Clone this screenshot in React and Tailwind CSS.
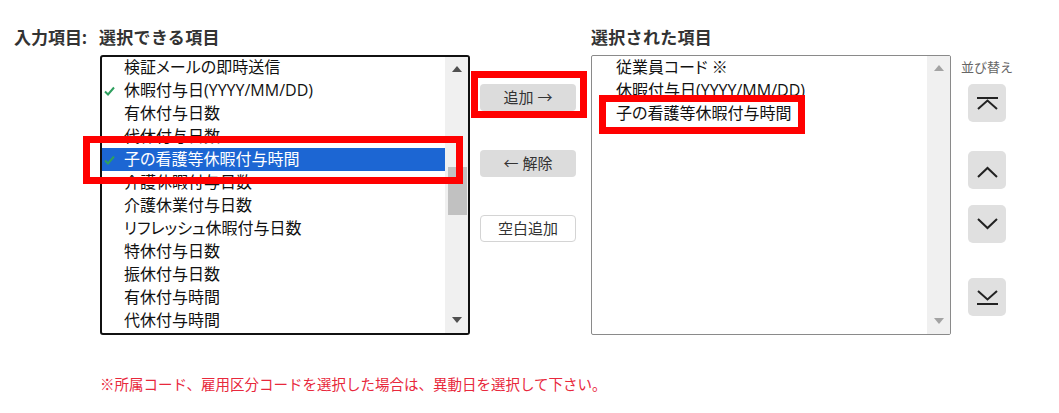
import React from "react";

const available = [
	{ label: "検証メールの即時送信" },
	{ label: "休暇付与日(YYYY/MM/DD)", checked: true },
	{ label: "有休付与日数" },
	{ label: "代休付与日数" },
	{ label: "子の看護等休暇付与時間", checked: true, selected: true },
	{ label: "介護休暇付与日数" },
	{ label: "介護休業付与日数" },
	{ label: "リフレッシュ休暇付与日数" },
	{ label: "特休付与日数" },
	{ label: "振休付与日数" },
	{ label: "有休付与時間" },
	{ label: "代休付与時間" },
];

const chosen = ["従業員コード ※", "休暇付与日(YYYY/MM/DD)", "子の看護等休暇付与時間"];

function Check() {
	return (
		<svg width="11" height="10" viewBox="0 0 11 10" className="absolute left-[2px] top-[7px]">
			<polyline points="1,5.5 4,8.5 10,1.5" fill="none" stroke="#2e9f5e" strokeWidth="2" />
		</svg>
	);
}

function ScrollBar({ dark, thumb }) {
	const arrow = dark ? "#505050" : "#a3a3a3";
	return (
		<div className="relative w-[23px] h-full bg-[#f0f0f0] shrink-0">
			<svg width="10" height="6" viewBox="0 0 10 6" className="absolute left-[7px] top-[9px]">
				<polygon points="0,6 5,0 10,6" fill={arrow} />
			</svg>
			{thumb && <div className="absolute left-[3px] right-[1px] top-[110px] h-[48px] bg-[#c1c1c1]" />}
			<svg width="10" height="6" viewBox="0 0 10 6" className="absolute left-[7px] bottom-[10px]">
				<polygon points="0,0 10,0 5,6" fill={arrow} />
			</svg>
		</div>
	);
}

function SortButton({ children }) {
	return (
		<button className="w-[38px] h-[38px] rounded-[5px] bg-[#e0e0e0]">
			<svg width="38" height="38" viewBox="0 0 38 38" fill="none" stroke="#222" strokeWidth="2">
				{children}
			</svg>
		</button>
	);
}

export default function App() {
	return (
		<div
			className="w-[1059px] h-[413px] bg-white text-[#222] pl-[14px] pt-[27px]"
			style={{ fontFamily: '"Open Sans", "Noto Sans CJK JP", sans-serif' }}
		>
			<div className="flex">
				<div className="w-[86px] shrink-0 text-[17px] leading-[21px] font-bold text-[#333]">入力項目:</div>

				{/* available list */}
				<div className="w-[370px] shrink-0">
					<div className="text-[17px] leading-[21px] font-bold text-[#333] mb-[7px] -ml-px tracking-[0.3px]">選択できる項目</div>
					<div className="relative">
						<div className="h-[280px] border-2 border-[#111] rounded-[3px] flex overflow-hidden">
							<div className="flex-1 overflow-hidden">
								<ul className="-mt-px [font-feature-settings:'palt']">
									{available.map((item, i) => (
										<li
											key={i}
											className={`relative h-[23px] leading-[23px] pl-[22px] text-[16px] whitespace-nowrap ${
												item.selected ? "bg-[#1c66d3] text-white" : "text-[#111]"
											}`}
										>
											{item.checked && <Check />}
											{item.label}
										</li>
									))}
								</ul>
							</div>
							<ScrollBar dark thumb />
						</div>
						<div className="absolute left-[-17px] top-[81px] w-[380px] h-[48px] border-[7px] border-[#ff0000]" />
					</div>
				</div>

				{/* move buttons */}
				<div className="w-[121px] shrink-0 pt-[28px] pl-[10px]">
					<div className="relative mt-[29px]">
						<button className="w-[96px] h-[27px] rounded-[4px] bg-[#dcdcdc] text-[15px] text-[#333]">追加 →</button>
						<div className="absolute left-[-9px] top-[-13px] w-[116px] h-[47px] border-[7px] border-[#ff0000]" />
					</div>
					<button className="mt-[39px] w-[96px] h-[27px] rounded-[4px] bg-[#dcdcdc] text-[15px] text-[#333]">← 解除</button>
					<button className="mt-[38px] w-[96px] h-[27px] rounded-[4px] bg-white border border-[#d4d4d4] text-[15px] text-[#333]">空白追加</button>
				</div>

				{/* chosen list */}
				<div className="w-[360px] shrink-0">
					<div className="text-[17px] leading-[21px] font-bold text-[#333] mb-[7px] tracking-[0.3px]">選択された項目</div>
					<div className="relative">
						<div className="h-[280px] border border-[#8a8a8a] rounded-[2px] flex overflow-hidden">
							<div className="flex-1">
								<ul className="[font-feature-settings:'palt']">
									{chosen.map((label, i) => (
										<li key={i} className="h-[23px] leading-[23px] pl-[24px] text-[16px] text-[#111] whitespace-nowrap">
											{label}
										</li>
									))}
								</ul>
							</div>
							<ScrollBar />
						</div>
						<div className="absolute left-[8px] top-[40px] w-[206px] h-[39px] border-[7px] border-[#ff0000]" />
					</div>
				</div>

				{/* sort */}
				<div className="pt-[28px] pl-[10px]">
					<div className="mt-[4px] text-[13px] leading-[16px] text-[#666]">並び替え</div>
					<div className="ml-[7px] mt-[9px] flex flex-col">
						<SortButton>
							<line x1="9" y1="14" x2="30" y2="14" />
							<polyline points="10,25 19.5,16.5 29,25" />
						</SortButton>
						<div className="mt-[29px]">
							<SortButton>
								<polyline points="10,26 19.5,17 29,26" />
							</SortButton>
						</div>
						<div className="mt-[10px]">
							<SortButton>
								<polyline points="10,14 19.5,23 29,14" />
							</SortButton>
						</div>
						<div className="mt-[29px]">
							<SortButton>
								<polyline points="10,13 19.5,21.5 29,13" />
								<line x1="9" y1="26" x2="30" y2="26" />
							</SortButton>
						</div>
					</div>
				</div>
			</div>

			<p className="mt-[41px] ml-[86px] text-[14.5px] leading-[18px] text-[#e8283c]">
				※所属コード、雇用区分コードを選択した場合は、異動日を選択して下さい。
			</p>
		</div>
	);
}
